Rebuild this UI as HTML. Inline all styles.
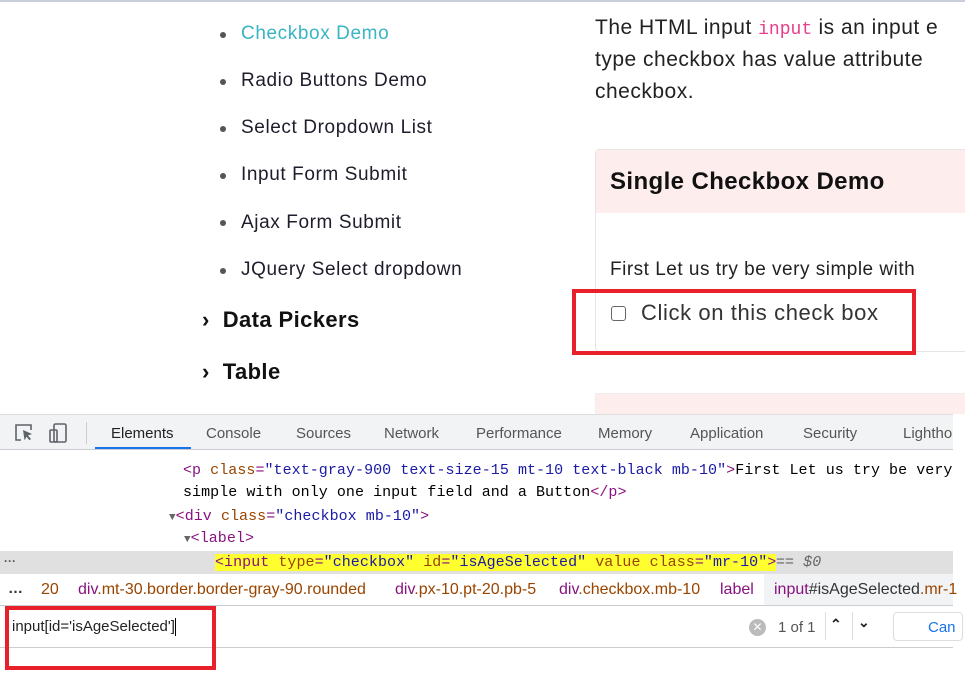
<!DOCTYPE html>
<html><head><meta charset="utf-8"><style>
*{margin:0;padding:0;box-sizing:border-box}
body{width:965px;height:682px;overflow:hidden;background:#fff;position:relative;font-family:"Liberation Sans",sans-serif}
.a{position:absolute;white-space:nowrap}
.nav{font-size:19px;color:#1d1d2b;letter-spacing:0.6px}
.dot{position:absolute;width:6px;height:6px;border-radius:50%;background:#555}
.h{font-size:22px;font-weight:bold;color:#111;letter-spacing:0.4px}
.p{font-size:21px;color:#222;letter-spacing:0.5px}
.code{font-family:"Liberation Mono",monospace;font-size:15px;letter-spacing:0.05px}
.tg{color:#881280}.at{color:#994500}.av{color:#1a1aa6}
.tab{font-size:15px;color:#555;top:425px}
.bc{font-size:16px;top:581px}
</style></head><body>
<div class="a" style="left:0;top:0;width:965px;height:2px;background:#c8cfdc"></div>

<div class="dot" style="left:220px;top:32px"></div>
<div class="a nav" style="left:241px;top:23px;color:#3ab5c5">Checkbox Demo</div>
<div class="dot" style="left:220px;top:79px"></div>
<div class="a nav" style="left:241px;top:70px">Radio Buttons Demo</div>
<div class="dot" style="left:220px;top:126px"></div>
<div class="a nav" style="left:241px;top:117px">Select Dropdown List</div>
<div class="dot" style="left:220px;top:173px"></div>
<div class="a nav" style="left:241px;top:164px">Input Form Submit</div>
<div class="dot" style="left:220px;top:220px"></div>
<div class="a nav" style="left:241px;top:212px">Ajax Form Submit</div>
<div class="dot" style="left:220px;top:268px"></div>
<div class="a nav" style="left:241px;top:259px">JQuery Select dropdown</div>
<div class="a h" style="left:202px;top:307px">›&nbsp;&nbsp;Data Pickers</div>
<div class="a h" style="left:202px;top:359px">›&nbsp;&nbsp;Table</div>

<div class="a p" style="left:595px;top:16px">The HTML input <span style="font-family:'Liberation Mono',monospace;color:#e83e8c;font-size:18px;letter-spacing:0">input</span> is an input e</div>
<div class="a p" style="left:595px;top:48px">type checkbox has value attribute</div>
<div class="a p" style="left:595px;top:80px">checkbox.</div>

<div class="a" style="left:595px;top:149px;width:380px;height:203px;border:1px solid #e5e5e5;border-radius:4px"></div>
<div class="a" style="left:596px;top:150px;width:369px;height:63px;background:#fdeded"></div>
<div class="a" style="left:610px;top:168px;font-size:24px;font-weight:bold;color:#111;letter-spacing:0.4px">Single Checkbox Demo</div>
<div class="a" style="left:610px;top:259px;font-size:19px;color:#222;letter-spacing:0.5px">First Let us try be very simple with</div>
<div class="a" style="left:611px;top:306px;width:15px;height:15px;border:1px solid #666;border-radius:3px"></div>
<div class="a" style="left:641px;top:300px;font-size:22px;color:#333;letter-spacing:0.6px">Click on this check box</div>
<div class="a" style="left:572px;top:289px;width:344px;height:66px;border:4px solid #e8202a"></div>
<div class="a" style="left:595px;top:393px;width:380px;height:30px;border:1px solid #eee;background:#fdeded"></div>

<!-- devtools -->
<div class="a" style="left:0;top:414px;width:953px;height:36px;background:#f1f3f4;border-top:1px solid #ddd;border-bottom:1px solid #cacdd1"></div>
<div class="a" style="left:953px;top:414px;width:12px;height:268px;background:#fff"></div>
<svg class="a" style="left:14px;top:422px" width="58" height="22" viewBox="0 0 58 22" fill="none" stroke="#5f6368" stroke-width="1.6">
<path d="M7 18H2V3h15v5"/><path d="M9 8l9 4-4 1.5 3 3.5-1.5 1.3-3-3.5-2 3.5z" fill="#5f6368" stroke="none"/>
<rect x="40" y="2" width="12" height="18" rx="1.5"/><rect x="36" y="8" width="7" height="12" rx="1"/>
</svg>
<div class="a" style="left:86px;top:422px;width:1px;height:22px;background:#ccc"></div>
<div class="a tab" style="left:111px;color:#222">Elements</div>
<div class="a" style="left:95px;top:447px;width:96px;height:2px;background:#1a73e8"></div>
<div class="a tab" style="left:206px">Console</div>
<div class="a tab" style="left:296px">Sources</div>
<div class="a tab" style="left:384px">Network</div>
<div class="a tab" style="left:476px">Performance</div>
<div class="a tab" style="left:598px">Memory</div>
<div class="a tab" style="left:690px">Application</div>
<div class="a tab" style="left:803px">Security</div>
<div class="a tab" style="left:903px">Lightho</div>

<div class="a code" style="left:183px;top:462px"><span class="tg">&lt;p</span> <span class="at">class</span><span class="tg">=</span><span class="av">"text-gray-900 text-size-15 mt-10 text-black mb-10"</span><span class="tg">&gt;</span>First Let us try be very</div>
<div class="a code" style="left:183px;top:484px">simple with only one input field and a Button<span class="tg">&lt;/p&gt;</span></div>
<div class="a code" style="left:169px;top:508px"><span style="color:#666;font-size:11px">▼</span><span class="tg">&lt;div</span> <span class="at">class</span><span class="tg">=</span><span class="av">"checkbox mb-10"</span><span class="tg">&gt;</span></div>
<div class="a code" style="left:184px;top:530px"><span style="color:#666;font-size:11px">▼</span><span class="tg">&lt;label&gt;</span></div>
<div class="a" style="left:0;top:551px;width:953px;height:23px;background:#e0e0e0"></div>
<div class="a" style="left:4px;top:554px;font-size:12px;color:#555;font-weight:bold">···</div>
<div class="a code" style="left:215px;top:554px;background:#ffff30;color:#881280">&lt;input <span class="at">type</span>=<span class="av">"checkbox"</span> <span class="at">id</span>=<span class="av">"isAgeSelected"</span> <span class="at">value</span> <span class="at">class</span>=<span class="av">"mr-10"</span>&gt;</div>
<div class="a code" style="left:776px;top:554px;color:#666">== <i>$0</i></div>

<div class="a" style="left:0;top:574px;width:953px;height:32px;background:#fff;border-bottom:1px solid #cacdd1"></div>
<div class="a" style="left:8px;top:580px;font-size:15px;color:#333;font-weight:bold">…</div>
<div class="a bc" style="left:41px;color:#994500">20</div>
<div class="a bc" style="left:78px"><span class="tg">div</span><span class="at">.mt-30.border.border-gray-90.rounded</span></div>
<div class="a bc" style="left:395px"><span class="tg">div</span><span class="at">.px-10.pt-20.pb-5</span></div>
<div class="a bc" style="left:559px"><span class="tg">div</span><span class="at">.checkbox.mb-10</span></div>
<div class="a bc" style="left:720px"><span class="tg">label</span></div>
<div class="a" style="left:764px;top:574px;width:189px;height:31px;background:#f1f3f4"></div>
<div class="a bc" style="left:774px"><span class="tg">input</span><span style="color:#333">#isAgeSelected</span><span class="at">.mr-1</span></div>

<div class="a" style="left:0;top:606px;width:953px;height:42px;background:#fff;border-bottom:1px solid #cacdd1"></div>
<div class="a" style="left:12px;top:618px;font-size:15px;color:#222">input[id='isAgeSelected']<span style="display:inline-block;width:1px;height:18px;background:#000;vertical-align:middle"></span></div>
<div class="a" style="left:749px;top:619px;width:17px;height:17px;border-radius:50%;background:#bbb;color:#fff;font-size:12px;text-align:center;line-height:17px">✕</div>
<div class="a" style="left:778px;top:619px;font-size:15px;color:#555">1 of 1</div>
<div class="a" style="left:825px;top:612px;width:1px;height:28px;background:#ddd"></div>
<div class="a" style="left:830px;top:616px;font-size:14px;color:#222;font-weight:bold">⌃</div>
<div class="a" style="left:852px;top:612px;width:1px;height:28px;background:#ddd"></div>
<div class="a" style="left:858px;top:614px;font-size:14px;color:#222;font-weight:bold">⌄</div>
<div class="a" style="left:893px;top:612px;width:70px;height:29px;border:1px solid #ddd;border-radius:4px;background:#fff"></div>
<div class="a" style="left:928px;top:619px;font-size:15px;color:#1a73e8">Can</div>
<div class="a" style="left:5px;top:606px;width:211px;height:64px;border:4px solid #e8202a"></div>
</body></html>
